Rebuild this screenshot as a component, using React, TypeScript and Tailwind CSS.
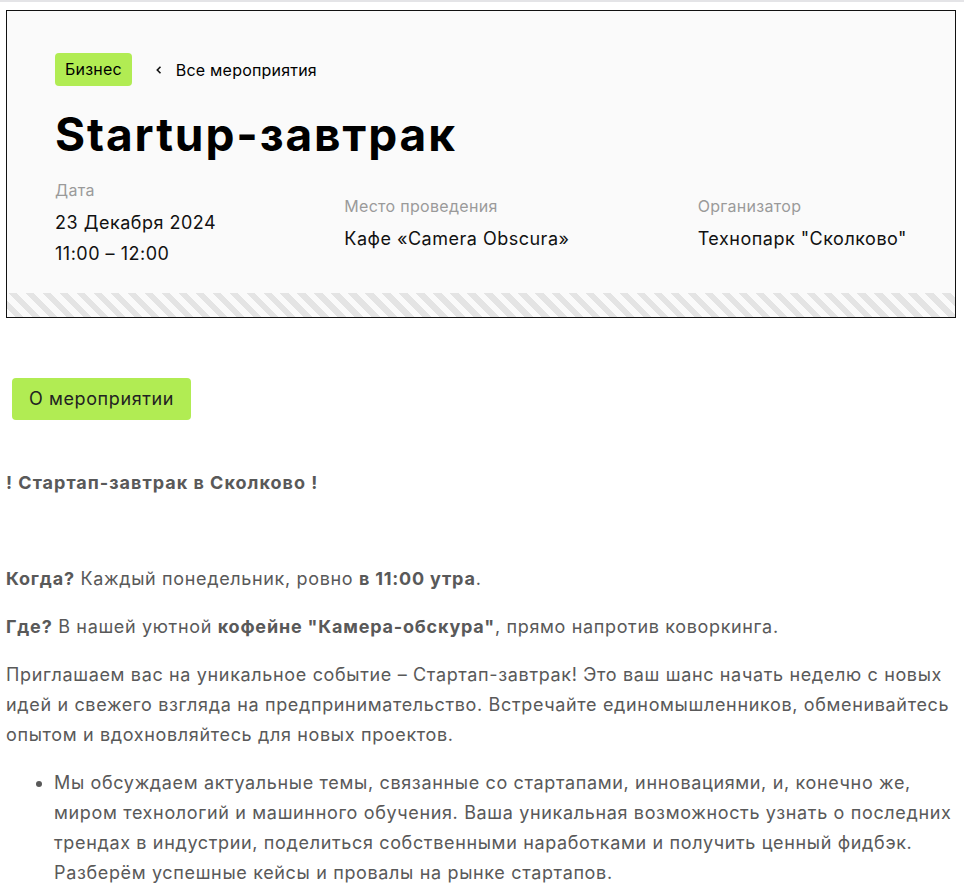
// Event page - header card with meta info and description
import React from "react";

const meta = [
  { label: "Дата", values: ["23 Декабря 2024", "11:00 – 12:00"] },
  { label: "Место проведения", values: ["Кафе «Camera Obscura»"] },
  { label: "Организатор", values: ['Технопарк "Сколково"'] },
];

const font = { fontFamily: "Inter, 'Noto Sans', sans-serif" };

const App: React.FC = () => {
  return (
    <div className="min-h-screen bg-white" style={font}>
      <div className="h-[2px] bg-[#e4e4e7]" />

      {/* Header card */}
      <div className="mx-[6px] mt-[8px] w-[950px] border border-[#111] bg-[#fafafa]">
        <div className="px-[48px] pt-[42px] pb-[27px]">
          <div className="flex items-center gap-[18px]">
            <span className="rounded-[4px] bg-[#b1ec53] px-[10px] py-[6px] text-[16px] leading-[21px] tracking-[0.2px] text-black">
              Бизнес
            </span>
            <a href="#" className="flex items-center gap-[12px] pl-[4px] text-[16px] tracking-[0.2px] text-black">
              <svg width="10" height="10" viewBox="0 0 10 10" fill="none">
                <path d="M6.5 1.8 3.3 5l3.2 3.2" stroke="#111" strokeWidth="1.6" />
              </svg>
              <span>Все мероприятия</span>
            </a>
          </div>

          <h1 className="mt-[20px] text-[46px] font-bold leading-[56px] tracking-[1.9px] text-black">
            Startup-завтрак
          </h1>

          <div className="mt-[16px] flex items-center justify-between">
            {meta.map((m) => (
              <div key={m.label} className="flex flex-col">
                <span className="text-[16px] leading-[24px] tracking-[0.3px] text-[#9a9a9a]">{m.label}</span>
                {m.values.map((v, i) => (
                  <span
                    key={v}
                    className={`${i === 0 ? "mt-[9px]" : "mt-[7px]"} text-[18px] leading-[24px] tracking-[0.5px] text-[#111]`}
                  >
                    {v}
                  </span>
                ))}
              </div>
            ))}
          </div>
        </div>

        {/* Striped footer */}
        <div className="h-[24px] bg-[repeating-linear-gradient(45deg,#fafafa_0px,#fafafa_6px,#e4e4e4_6px,#e4e4e4_12px)]" />
      </div>

      {/* About */}
      <div className="px-[6px] pt-[60px]">
        <button className="ml-[6px] rounded-[4px] bg-[#b1ec53] px-[17px] py-[9px] text-[18px] leading-[24px] tracking-[0.6px] text-[#222]">
          О мероприятии
        </button>

        <div className="mt-[48px] text-[18px] leading-[30px] tracking-[0.65px] text-[#595959]">
          <p className="mb-[18px] font-bold tracking-[1px]">! Стартап-завтрак в Сколково !</p>
          <p className="mb-[18px]">
            <br />
          </p>
          <p className="mb-[18px]">
            <b className="tracking-[0.8px]">Когда?</b> Каждый понедельник, ровно <b className="tracking-[0.8px]">в 11:00 утра</b>.
          </p>
          <p className="mb-[18px]">
            <b className="tracking-[0.8px]">Где?</b> В нашей уютной <b className="tracking-[0.8px]">кофейне "Камера-обскура"</b>, прямо напротив коворкинга.
          </p>
          <p className="mb-[18px]">
            Приглашаем вас на уникальное событие – Стартап-завтрак! Это ваш шанс начать неделю с новых идей и свежего
            взгляда на предпринимательство. Встречайте единомышленников, обменивайтесь опытом и вдохновляйтесь для новых
            проектов.
          </p>
          <ul className="list-disc pl-[48px]">
            <li>
              Мы обсуждаем актуальные темы, связанные со стартапами, инновациями, и, конечно же, миром технологий и
              машинного обучения. Ваша уникальная возможность узнать о последних трендах в индустрии, поделиться
              собственными наработками и получить ценный фидбэк. Разберём успешные кейсы и провалы на рынке стартапов.
            </li>
          </ul>
        </div>
      </div>
    </div>
  );
};

export default App;
